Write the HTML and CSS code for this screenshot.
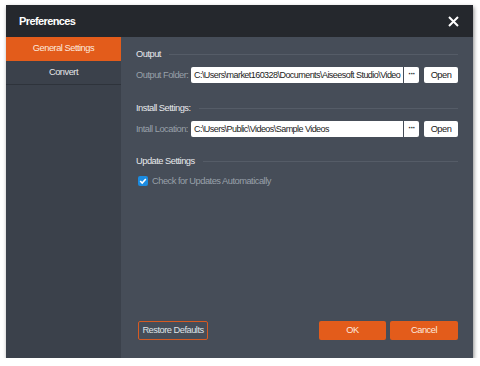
FILE: index.html
```html
<!DOCTYPE html>
<html>
<head>
<meta charset="utf-8">
<link rel="stylesheet" href="styles.css">
</head>
<body>
<div class="dialog">
  <div class="titlebar">
    <span class="title">Preferences</span>
    <svg class="close" width="11" height="11" viewBox="0 0 11 11"><path d="M1 1L10 10M10 1L1 10" stroke="#fff" stroke-width="2"/></svg>
  </div>
  <div class="main">
    <div class="sidebar">
      <div class="nav active">General Settings</div>
      <div class="nav">Convert</div>
    </div>
    <div class="content">
      <div class="heading"><span>Output</span><i></i></div>
      <div class="field">
        <span class="label">Output Folder:</span>
        <div class="input">C:\Users\market160328\Documents\Aiseesoft Studio\Video</div>
        <div class="dots">···</div>
        <div class="open">Open</div>
      </div>
      <div class="heading h2"><span>Install Settings:</span><i></i></div>
      <div class="field">
        <span class="label">Intall Location:</span>
        <div class="input">C:\Users\Public\Videos\Sample Videos</div>
        <div class="dots">···</div>
        <div class="open">Open</div>
      </div>
      <div class="heading h3"><span>Update Settings</span><i></i></div>
      <div class="check">
        <span class="box"><svg width="10" height="10" viewBox="0 0 10 10"><path d="M2.2 5L4.2 7L7.8 3" stroke="#fff" stroke-width="1.6" fill="none"/></svg></span>
        <span>Check for Updates Automatically</span>
      </div>
      <div class="footer">
        <div class="btn restore">Restore Defaults</div>
        <div class="spacer"></div>
        <div class="btn primary ok">OK</div>
        <div class="btn primary cancel">Cancel</div>
      </div>
    </div>
  </div>
</div>
</body>
</html>
```
FILE: styles.css
```css
html, body { margin: 0; padding: 0; background: #fff; }
body { font-family: "Liberation Sans", Arial, sans-serif; font-size: 9.3px; letter-spacing: -0.5px; white-space: nowrap; }
.dialog {
  margin: 5px 0 0 6px;
  width: 467px;
  height: 353px;
  display: flex;
  flex-direction: column;
  box-shadow: 1px 2px 4px rgba(0,0,0,0.45);
}
.titlebar {
  height: 32px;
  flex-shrink: 0;
  background: #25282d;
  display: flex;
  align-items: center;
  padding: 0 14px 0 13px;
  color: #fff;
}
.title { font-weight: bold; font-size: 11px; letter-spacing: -0.6px; flex: 1; }
.close { display: block; }
.main { flex: 1; display: flex; min-height: 0; }
.sidebar { width: 115px; flex-shrink: 0; background: #3b414b; }
.nav {
  height: 23px;
  line-height: 23px;
  text-align: center;
  color: #e4e6e9;
  border-bottom: 1px solid #2e333b;
}
.nav.active { background: #e35c1b; color: #fde9de; border-bottom: 1px solid #e35c1b; }
.content {
  flex: 1;
  min-width: 0;
  background: #464d58;
  display: flex;
  flex-direction: column;
  padding: 11px 15px 18px 15px;
}
.heading { display: flex; align-items: center; height: 12px; color: #e6e8eb; }
.heading i { flex: 1; height: 1px; background: #555c67; margin-left: 8px; }
.h2 { margin-top: 19px; }
.h3 { margin-top: 18px; }
.field { display: flex; align-items: center; height: 16px; margin-top: 7px; }
.label { color: #98a0a9; width: 55px; flex-shrink: 0; }
.input {
  flex: 1;
  min-width: 0;
  height: 16px;
  line-height: 16px;
  background: #fff;
  color: #222;
  padding-left: 3px;
  border-radius: 2px 0 0 2px;
  overflow: hidden;
  font-size: 9px;
  letter-spacing: -0.55px;
}
.dots {
  width: 15px;
  flex-shrink: 0;
  height: 16px;
  line-height: 15px;
  background: #fff;
  margin-left: 1px;
  text-align: center;
  color: #333;
  font-weight: bold;
  border-radius: 0 2px 2px 0;
  letter-spacing: -1px;
}
.open {
  width: 34px;
  flex-shrink: 0;
  height: 16px;
  line-height: 16px;
  margin-left: 5px;
  background: #fff;
  color: #222;
  text-align: center;
  border-radius: 2px;
}
.check { display: flex; align-items: center; margin-top: 8px; margin-left: 2px; color: #98a0a9; height: 12px; }
.box {
  width: 10px; height: 10px; background: #1b8be0; border-radius: 2px; margin-right: 4px;
  display: flex; flex-shrink: 0;
}
.footer { margin-top: auto; display: flex; height: 19px; flex-shrink: 0; }
.spacer { flex: 1; }
.btn { height: 19px; line-height: 19px; text-align: center; border-radius: 2px; box-sizing: border-box; flex-shrink: 0; }
.restore { width: 70px; margin-left: 2px; border: 1px solid #d65a22; color: #dfe2e6; line-height: 17px; }
.primary { background: #e35c1b; color: #fde9de; }
.ok { width: 67px; }
.cancel { width: 68px; margin-left: 4px; }
```
